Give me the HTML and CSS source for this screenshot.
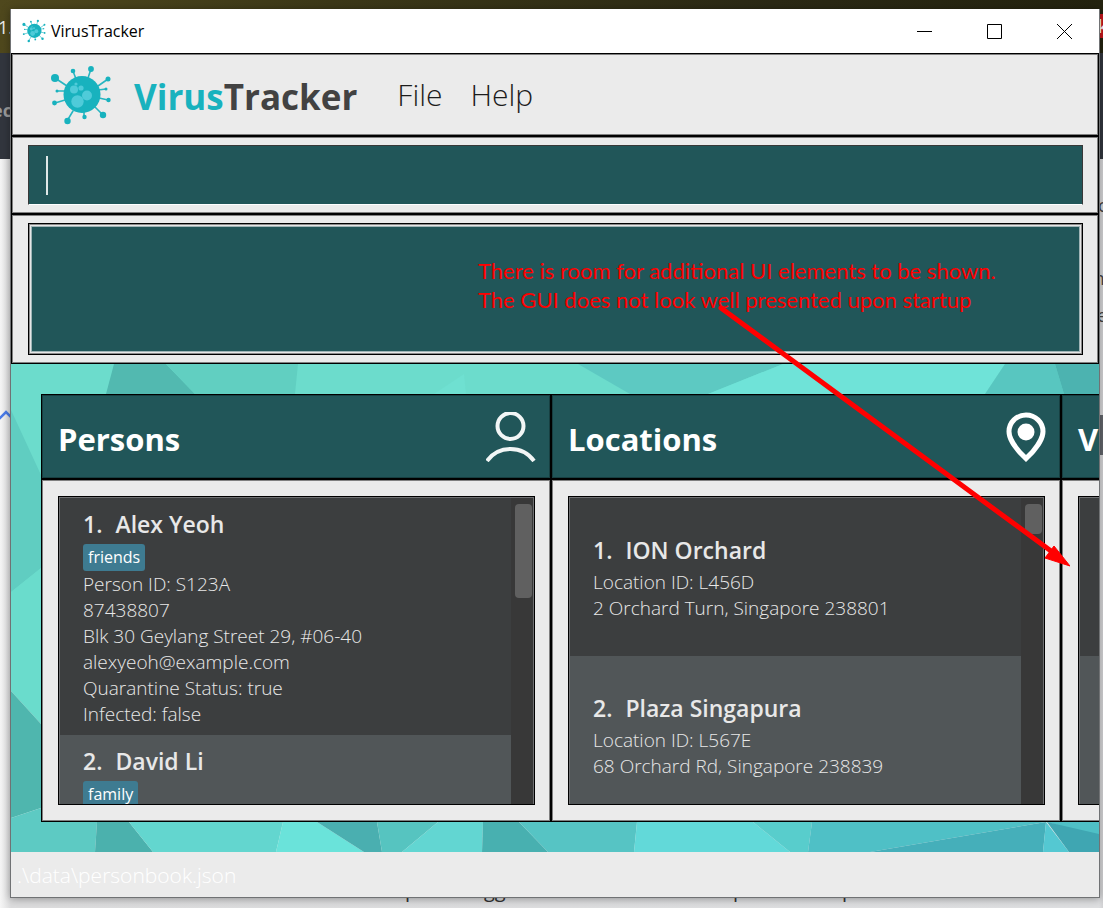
FILE: index.html
```html
<!DOCTYPE html>
<html lang="en">
<head>
<meta charset="utf-8">
<title>VirusTracker</title>
<link rel="stylesheet" href="styles.css">
</head>
<body>
<div class="desktop" aria-hidden="true">
  <div class="desktop-photo"></div>
  <div class="desktop-bar"></div>
  <span class="scrap scrap-number">1.</span>
  <span class="scrap scrap-word">ec</span>
  <span class="scrap scrap-badge">k</span>
  <span class="scrap scrap-c">c</span>
  <span class="scrap scrap-m">m</span>
  <span class="scrap scrap-e">e</span>
  <svg class="scrap-chevron" viewBox="0 0 12 10"><path d="M-1 9 6 2l7 7" fill="none" stroke="#4a7be8" stroke-width="2.6"/></svg>
  <span class="scrap-block"></span>
  <span class="tail tail-a">p</span>
  <span class="tail tail-b">gg</span>
  <span class="tail tail-c">p</span>
  <span class="tail tail-d">p</span>
</div>

<svg class="defs" width="0" height="0" aria-hidden="true">
  <symbol id="virus" viewBox="50 64 62 62">
    <g stroke="#27b6c2" stroke-width="1.6" stroke-linecap="round">
      <path d="M55 78l12 8M73 71l3 8M91 69l-3 9M108 79l-10 7M106 89l-8 1M108 100l-9-2M103 115l-8-8M84 118v-8M67 121l6-10M55 103l10-3M57 91h7"/>
    </g>
    <g fill="#18b2be">
      <circle cx="82" cy="94.500" r="18.500"/>
      <circle cx="55" cy="78" r="4"/><circle cx="73" cy="71" r="2.300"/><circle cx="91" cy="69" r="2.900"/>
      <circle cx="108" cy="79" r="2.500"/><circle cx="106" cy="89" r="1.500"/><circle cx="108.500" cy="100" r="2.200"/>
      <circle cx="103" cy="115" r="3.200"/><circle cx="84.500" cy="117" r="2.200"/><circle cx="67.500" cy="121" r="3.200"/>
      <circle cx="54.500" cy="103" r="2.400"/><circle cx="57" cy="91" r="1.500"/>
    </g>
    <g fill="#4fcbd9">
      <circle cx="74" cy="89.500" r="4"/><circle cx="81" cy="88" r="2.600"/><circle cx="87" cy="95.500" r="5"/>
      <circle cx="77.500" cy="101.500" r="6.200"/><circle cx="76" cy="84" r="1.600"/>
    </g>
  </symbol>
</svg>

<div class="window">
  <header class="titlebar">
    <svg class="titlebar-icon" aria-hidden="true"><use href="#virus"/></svg>
    <span class="titlebar-text">VirusTracker</span>
    <button class="win-btn" type="button" aria-label="Minimize"><svg viewBox="0 0 15 15"><path d="M0 7.500h15"/></svg></button>
    <button class="win-btn" type="button" aria-label="Maximize"><svg viewBox="0 0 15 15"><path d="M.5.5h14v14H.5z"/></svg></button>
    <button class="win-btn" type="button" aria-label="Close"><svg viewBox="0 0 15 15"><path d="M0 0l15 15M15 0L0 15"/></svg></button>
  </header>

  <nav class="pane menu">
    <svg class="logo" aria-hidden="true"><use href="#virus"/></svg>
    <h1 class="brand"><span class="brand-accent">Virus</span>Tracker</h1>
    <button class="menu-item" type="button">File</button>
    <button class="menu-item" type="button">Help</button>
  </nav>

  <div class="pane command">
    <input class="command-input" type="text" aria-label="Command">
  </div>

  <div class="pane result">
    <textarea class="result-box" aria-label="Result" readonly></textarea>
  </div>

  <main class="board">
    <svg class="facets" viewBox="11 364 1088 488" preserveAspectRatio="none" aria-hidden="true">
      <path fill="#6cdccc" d="M11 364h1088v230H11z"/>
      <path fill="#52b9b0" d="M114 364h52l29 30h-89z"/>
      <path fill="#61cfc1" d="M166 364h132l-3 30H195z"/>
      <path fill="#6fe0d1" d="M464 374l-30 20h32z"/>
      <path fill="#5dc9c2" d="M578 364h205l-75 30h-78z"/>
      <path fill="#6fe3d8" d="M783 364h222l-20 30H708z"/>
      <path fill="#58c6c0" d="M1005 364h50l9 30h-79z"/>
      <path fill="#4cb3b0" d="M1055 364h44v30h-35z"/>
      <path fill="#60cdc1" d="M11 410l30 65v93l-30 24z"/>
      <path fill="#6adccc" d="M11 592l30-24v156l-30-33z"/>
      <path fill="#4fb6ae" d="M11 691l30 33v84l-30 10z"/>
      <path fill="#5dcac3" d="M11 818l30-10 56 14-2 30H11z"/>
      <path fill="#4bb1ad" d="M97 822h32l24 30H95z"/>
      <path fill="#63d6cf" d="M129 822h154l-7 30H153z"/>
      <path fill="#6ae3da" d="M283 822h34l47 30h-88z"/>
      <path fill="#4aafb0" d="M317 822h60l5 30h-18z"/>
      <path fill="#56c4c0" d="M377 822h61l-36 30h-20z"/>
      <path fill="#62d6d2" d="M438 822h45l-1 30h-80z"/>
      <path fill="#48b0b0" d="M483 822h36l29 30h-66z"/>
      <path fill="#56c4c4" d="M519 822h118l-3 30h-86z"/>
      <path fill="#62d9d9" d="M637 822h116l37 30H634z"/>
      <path fill="#58cdcc" d="M753 822h59l-4 30h-18z"/>
      <path fill="#4fc0c6" d="M812 822h287v14l-53-14-176 30h-62z"/>
      <path fill="#45afba" d="M1046 822l-3 30H870z"/>
      <path fill="#54c8d2" d="M1046 822l23 30h-26z"/>
      <path fill="#3fa6b2" d="M1047 822l52 12v18h-30z"/>
    </svg>

    <section class="column">
      <header class="column-head">
        <h2 class="column-title">Persons</h2>
        <svg class="column-icon" viewBox="0 0 50 50" aria-hidden="true"><g fill="none" stroke="#f2f6f6" stroke-width="4"><circle cx="24.500" cy="14" r="13"/><path d="M1 49a29 29 0 0 1 47 0"/></g></svg>
      </header>
      <div class="column-body">
        <div class="list">
          <ol class="rows">
            <li class="row">
              <h3 class="name"><span class="index">1.</span>Alex Yeoh</h3>
              <span class="tag">friends</span>
              <p class="line">Person ID: S123A</p>
              <p class="line">87438807</p>
              <p class="line">Blk 30 Geylang Street 29, #06-40</p>
              <p class="line">alexyeoh@example.com</p>
              <p class="line">Quarantine Status: true</p>
              <p class="line">Infected: false</p>
            </li>
            <li class="row row-alt row-last">
              <h3 class="name"><span class="index">2.</span>David Li</h3>
              <span class="tag">family</span>
            </li>
          </ol>
          <div class="track"><div class="thumb thumb-long"></div></div>
        </div>
      </div>
    </section>

    <section class="column">
      <header class="column-head">
        <h2 class="column-title">Locations</h2>
        <svg class="column-icon column-icon-pin" viewBox="0 0 40 50" aria-hidden="true"><path d="M20 3C10.500 3 3 10.500 3 19.500c0 8 6 15 10.500 20.500L20 46.500 26.500 40C31 34.500 37 27.500 37 19.500 37 10.500 29.500 3 20 3z" fill="none" stroke="#fff" stroke-width="5"/><circle cx="20" cy="20" r="8.500" fill="#fff"/></svg>
      </header>
      <div class="column-body">
        <div class="list">
          <ol class="rows">
            <li class="row row-place">
              <h3 class="name"><span class="index">1.</span>ION Orchard</h3>
              <p class="line">Location ID: L456D</p>
              <p class="line">2 Orchard Turn, Singapore 238801</p>
            </li>
            <li class="row row-place row-alt row-last">
              <h3 class="name"><span class="index">2.</span>Plaza Singapura</h3>
              <p class="line">Location ID: L567E</p>
              <p class="line">68 Orchard Rd, Singapore 238839</p>
            </li>
          </ol>
          <div class="track"><div class="thumb"></div></div>
        </div>
      </div>
    </section>

    <section class="column">
      <header class="column-head">
        <h2 class="column-title">V</h2>
      </header>
      <div class="column-body">
        <div class="list">
          <ol class="rows">
            <li class="row row-blank"></li>
            <li class="row row-alt row-last"></li>
          </ol>
        </div>
      </div>
    </section>
  </main>

  <footer class="status">.\data\personbook.json</footer>
</div>

<p class="note">There is room for additional UI elements to be shown.<br>The GUI does not look well presented upon startup</p>
<svg class="arrow" viewBox="0 0 360 270" aria-hidden="true">
  <path d="M11 8l330 243" stroke="#f00" stroke-width="5" stroke-linecap="round"/>
  <path d="M360 266l-25-8 9-12z" fill="#f00" stroke="#f00"/>
</svg>
</body>
</html>
```
FILE: styles.css
```css
* {
  box-sizing: border-box;
}

body {
  margin: 0;
  height: 100vh;
  padding: 9px 3px 10px 10px;
  position: relative;
  overflow: hidden;
  font-family: "Open Sans", "Noto Sans", sans-serif;
  background: #f3f3f4;
}

h1, h2, h3, p, ol {
  margin: 0;
  padding: 0;
}

button {
  border: 0;
  padding: 0;
  background: none;
  font: inherit;
}

.defs {
  position: absolute;
}

/* Desktop showing round the window */
.desktop {
  position: absolute;
  inset: 0;
  overflow: hidden;
  background: linear-gradient(to right, #f6f6f6 0, #dcdcdd 11px, #dedfe1 1099px, #d2d2d4 100%);
}

.desktop-photo {
  height: 53px;
  background: linear-gradient(to right, #4f481d 0, #3c3818 30%, #2b2915 70%, #24230f 100%);
}

.desktop-bar {
  height: 106px;
  background: #32363e;
}

.scrap,
.tail,
.scrap-chevron,
.scrap-block {
  position: absolute;
  font-size: 18px;
  line-height: 24px;
  color: #444;
}

.scrap-number {
  left: -2px;
  top: 15px;
  color: #eee;
}

.scrap-word {
  left: -8px;
  top: 98px;
  font-weight: 700;
  color: #9a9a9a;
}

.scrap-badge {
  left: 1098px;
  top: 14px;
  background: #c4161c;
  color: #fff;
}

.scrap-c { left: 1098px; top: 193px; }
.scrap-m { left: 1088px; top: 266px; }
.scrap-e { left: 1097px; top: 303px; }

.scrap-chevron {
  left: 0;
  top: 410px;
  width: 12px;
  height: 10px;
}

.scrap-block {
  left: 1099px;
  top: 415px;
  width: 4px;
  height: 40px;
  background: #62656b;
}

.tail {
  top: 878px;
  font-size: 20px;
  color: #333;
}

.tail-a { left: 405px; }
.tail-b { left: 484px; }
.tail-c { left: 733px; }
.tail-d { left: 842px; }

/* Window frame */
.window {
  position: relative;
  height: 100%;
  display: flex;
  flex-direction: column;
  border: solid #707274;
  border-width: 0 1px 1px;
  background: #ebebeb;
  box-shadow: 0 1px 8px rgba(0, 0, 0, 0.35);
  overflow: hidden;
}

.titlebar {
  flex: none;
  height: 44px;
  display: flex;
  align-items: center;
  padding-left: 11px;
  background: #fff;
}

.titlebar-icon {
  width: 24px;
  height: 24px;
  margin-right: 5px;
}

.titlebar-text {
  flex: 1;
  font-size: 16px;
  color: #000;
}

.win-btn {
  width: 70px;
  height: 44px;
  display: grid;
  place-items: center;
}

.win-btn svg {
  width: 15px;
  height: 15px;
  fill: none;
  stroke: #000;
}

.pane {
  flex: none;
  border: 1px solid #000;
  box-shadow: inset 0 0 0 1px #808080;
  padding: 8px 15px 8px 16px;
}

.menu {
  height: 83px;
  display: flex;
  align-items: center;
  padding-left: 38px;
}

.logo {
  width: 62px;
  height: 62px;
  margin-right: 22px;
}

.brand {
  margin-right: 40px;
  padding-top: 4px;
  font-size: 35px;
  line-height: 48px;
  font-weight: 700;
  color: #424242;
}

.brand-accent {
  color: #18b2be;
}

.menu-item {
  margin-right: 28px;
  font-size: 30px;
  line-height: 40px;
  font-weight: 300;
  color: #1c1c1c;
}

.command {
  position: relative;
}

.command::after {
  content: "";
  position: absolute;
  left: 34px;
  top: 19px;
  width: 2px;
  height: 39px;
  background: #dfe8e8;
}

.command-input {
  display: block;
  width: 100%;
  height: 60px;
  padding: 0 16px;
  border: 1px solid #383838;
  border-bottom-color: #fff;
  border-radius: 0;
  outline: 0;
  background: #215659;
  color: #fff;
  font: inherit;
  font-size: 24px;
}

.result-box {
  display: block;
  width: 100%;
  height: 132px;
  border: 1px solid #000;
  border-radius: 0;
  outline: 0;
  resize: none;
  background: #215659;
  box-shadow: inset 0 0 0 1px #8a8a8a, inset 0 0 0 2px #e6e6e6, inset 0 0 0 3px #9fb4b6;
  color: #fff;
  font: inherit;
}

/* Columns */
.board {
  position: relative;
  flex: 1;
  min-height: 0;
  display: flex;
  padding: 30px 0 30px 30px;
  overflow: hidden;
}

.facets {
  position: absolute;
  inset: 0;
  width: 100%;
  height: 100%;
}

.column {
  position: relative;
  flex: none;
  width: 510px;
  display: flex;
  flex-direction: column;
}

.column-head {
  flex: none;
  height: 85px;
  display: flex;
  align-items: center;
  justify-content: space-between;
  padding: 0 14px 0 16px;
  border: 1px solid #000;
  box-shadow: inset 0 0 0 1px #173f41;
  background: #215659;
}

.column-title {
  padding-top: 4px;
  font-size: 31px;
  line-height: 44px;
  font-weight: 700;
  color: #fff;
}

.column-icon {
  width: 50px;
  height: 50px;
}

.column-icon-pin {
  width: 40px;
}

.column-body {
  flex: 1;
  min-height: 0;
  display: flex;
  padding: 16px 15px 16px 16px;
  border: 1px solid #000;
  box-shadow: inset 0 0 0 1px #808080;
  background: #ebebeb;
}

.list {
  flex: 1;
  display: flex;
  min-width: 0;
  padding: 1px 1px 0;
  border: 1px solid #000;
  background: #707173;
  overflow: hidden;
}

.rows {
  flex: 1;
  display: flex;
  flex-direction: column;
  list-style: none;
}

.row {
  flex: none;
  padding: 9px 24px 8px 23px;
  background: #3c3e3f;
  color: #e8e8e8;
}

.row-alt {
  background: #515658;
}

.row-last {
  flex: 1 0 auto;
}

.row-place {
  padding-top: 35px;
  padding-bottom: 35px;
}

.row-blank {
  height: 158px;
}

.name {
  margin-bottom: 3px;
  font-size: 23px;
  line-height: 34px;
  font-weight: 600;
}

.row-place .name {
  margin-bottom: 2px;
}

.index {
  margin-right: 13px;
}

.tag {
  display: block;
  width: fit-content;
  padding: 0 5px;
  border-radius: 3px;
  background: #3e7b91;
  font-size: 16px;
  line-height: 27px;
  color: #fff;
}

.line {
  font-size: 19px;
  line-height: 26px;
  font-weight: 300;
}

.track {
  flex: none;
  width: 22px;
  padding: 6px 1px 0 4px;
  background: #383838;
}

.thumb {
  height: 30px;
  border-radius: 4px;
  background: #606060;
}

.thumb-long {
  height: 94px;
}

.status {
  flex: none;
  height: 45px;
  padding: 0 6px;
  font-size: 21px;
  line-height: 46px;
  font-weight: 300;
  color: #fff;
}

/* Reviewer's annotation over the window */
.note {
  position: absolute;
  left: 478px;
  top: 256px;
  font-family: Lato, "Open Sans", sans-serif;
  font-size: 22px;
  line-height: 29px;
  color: #f00;
  white-space: nowrap;
}

.arrow {
  position: absolute;
  left: 710px;
  top: 300px;
  width: 360px;
  height: 270px;
  fill: none;
}
```
